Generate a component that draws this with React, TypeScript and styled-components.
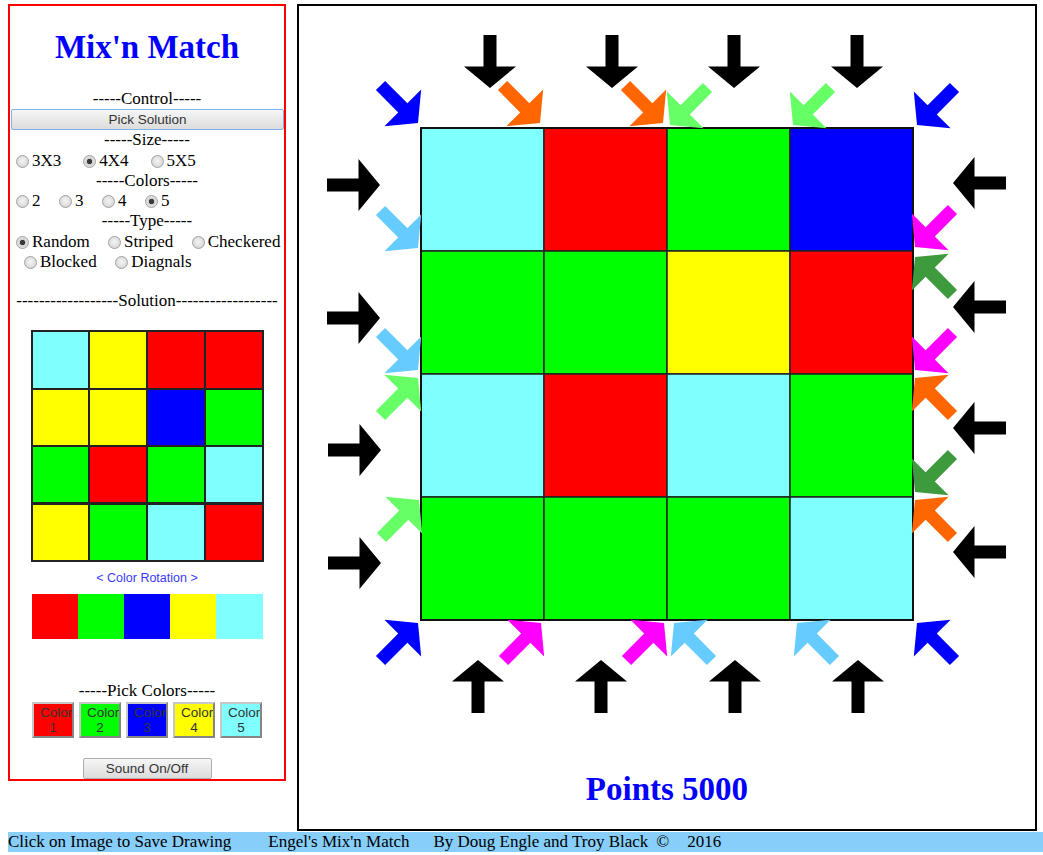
import React from "react";
import styled, { createGlobalStyle } from "styled-components";

const GlobalStyle = createGlobalStyle`
  html, body {
    margin: 0;
    padding: 0;
    background: #fff;
  }
  body {
    padding: 4px 0 0 8px;
    font-family: "Liberation Serif", "Times New Roman", serif;
    font-size: 17px;
    color: #000;
    overflow: hidden;
  }
`;

const C = {
  cyan: "#80ffff",
  red: "#ff0000",
  green: "#00ff00",
  blue: "#0000ff",
  yellow: "#ffff00",
};

const A = {
  black: "#000000",
  blue: "#0000ff",
  orange: "#ff6600",
  lime: "#66ff66",
  sky: "#66ccff",
  magenta: "#ff00ff",
  forest: "#3d9a3d",
};

const Page = styled.div`
  display: flex;
  flex-direction: column;
`;

const MainRow = styled.div`
  display: flex;
  align-items: flex-start;
  gap: 11px;
`;

const SidePanel = styled.div`
  width: 274px;
  height: 773px;
  border: 2px solid #ff0000;
  display: flex;
  flex-direction: column;
  align-items: center;
  text-align: center;
`;

const Title = styled.h1`
  margin: 23px 0 0;
  height: 37px;
  line-height: 37px;
  font-size: 33px;
  font-weight: bold;
  color: #0000ff;
`;

const SectionLabel = styled.div<{ $top?: number }>`
  margin-top: ${({ $top }) => $top ?? 0}px;
  height: 20.3px;
  line-height: 20.3px;
  white-space: nowrap;
`;

const GrayButton = styled.button<{ $focused?: boolean }>`
  box-sizing: border-box;
  height: 21px;
  padding: 0 6px;
  font-family: "Liberation Sans", Arial, sans-serif;
  font-size: 13.5px;
  color: #333;
  background: linear-gradient(#f6f6f6, #dcdcdc);
  border: 1px solid ${({ $focused }) => ($focused ? "#7eb4ea" : "#adadad")};
  border-radius: 2px;
`;

const PickButton = styled(GrayButton)`
  width: 273px;
  margin-left: 1px;
`;

const SoundButton = styled(GrayButton)`
  width: 129px;
  margin-top: 20px;
`;

const RadioRow = styled.div<{ $indent: number; $gap: number }>`
  align-self: stretch;
  height: 20.3px;
  display: flex;
  align-items: center;
  gap: ${({ $gap }) => $gap}px;
  padding-left: ${({ $indent }) => $indent}px;
  white-space: nowrap;
`;

const RadioLabel = styled.label`
  display: flex;
  align-items: center;
  gap: 3px;
`;

const Radio = styled.input`
  appearance: none;
  margin: 1px 0 0;
  width: 13px;
  height: 13px;
  border-radius: 50%;
  border: 1px solid #a0a0a0;
  background: radial-gradient(circle at 50% 45%, #f4f4f4 0, #dadada 70%, #c8c8c8 100%);
  box-sizing: border-box;
  &:checked {
    background: radial-gradient(circle, #3a3a3a 0, #3a3a3a 2.4px, #cfcfcf 3px, #e4e4e4 70%, #c8c8c8 100%);
  }
`;

const SolutionGrid = styled.div`
  margin-top: 19px;
  width: 233px;
  height: 232px;
  box-sizing: border-box;
  padding: 2px;
  display: grid;
  grid-template-columns: repeat(4, 1fr);
  grid-template-rows: repeat(4, 1fr);
  gap: 2.3px;
  background: #222;
`;

const Cell = styled.div<{ $color: string }>`
  background: ${({ $color }) => $color};
`;

const RotationLabel = styled.div`
  margin-top: 8px;
  height: 16px;
  line-height: 16px;
  font-family: "Liberation Sans", Arial, sans-serif;
  font-size: 12.5px;
  color: #3a3aff;
`;

const Strip = styled.div`
  margin-top: 8px;
  width: 231px;
  height: 45px;
  display: flex;
`;

const Swatch = styled.div<{ $color: string }>`
  flex: 1;
  background: ${({ $color }) => $color};
`;

const ColorButtons = styled.div`
  margin-top: 1px;
  display: flex;
  gap: 5px;
`;

const ColorButton = styled.button<{ $color: string }>`
  box-sizing: border-box;
  width: 42px;
  height: 36px;
  padding: 1px 6px;
  overflow: hidden;
  background: ${({ $color }) => $color};
  border: 2px solid;
  border-color: #c8c8c8 #858585 #858585 #c8c8c8;
  font-family: "Liberation Sans", Arial, sans-serif;
  font-size: 13.5px;
  line-height: 15px;
  color: #333;
  text-align: center;
`;

const Board = styled.div`
  width: 736px;
  height: 823px;
  border: 2px solid #000;
  display: flex;
  flex-direction: column;
  align-items: center;
`;

const BoardDrawing = styled.svg`
  display: block;
  flex: none;
`;

const Points = styled.div`
  margin-top: 21px;
  height: 37px;
  line-height: 37px;
  font-size: 33px;
  font-weight: bold;
  color: #0000ff;
`;

const Footer = styled.div`
  height: 20px;
  margin-top: 1px;
  background: #87cefa;
  display: flex;
  align-items: center;
  font-size: 17px;
  white-space: nowrap;
`;

const FooterItem = styled.span<{ $left: number }>`
  margin-left: ${({ $left }) => $left}px;
`;

const boardGrid = [
  [C.cyan, C.red, C.green, C.blue],
  [C.green, C.green, C.yellow, C.red],
  [C.cyan, C.red, C.cyan, C.green],
  [C.green, C.green, C.green, C.cyan],
];

const solutionGrid = [
  [C.cyan, C.yellow, C.red, C.red],
  [C.yellow, C.yellow, C.blue, C.green],
  [C.green, C.red, C.green, C.cyan],
  [C.yellow, C.green, C.cyan, C.red],
];

const rotation = [C.red, C.green, C.blue, C.yellow, C.cyan];

// tip x, tip y, direction in degrees, colour
type ArrowSpec = [number, number, number, string];

const arrows: ArrowSpec[] = [
  // straight arrows
  [490, 88, 90, A.black],
  [612, 88, 90, A.black],
  [734, 88, 90, A.black],
  [857, 88, 90, A.black],
  [380, 185, 0, A.black],
  [380, 318, 0, A.black],
  [381, 450, 0, A.black],
  [381, 563, 0, A.black],
  [953, 183, 180, A.black],
  [953, 307, 180, A.black],
  [953, 428, 180, A.black],
  [953, 552, 180, A.black],
  [478, 660, -90, A.black],
  [601, 660, -90, A.black],
  [735, 660, -90, A.black],
  [858, 660, -90, A.black],
  // top diagonals
  [418, 123, 45, A.blue],
  [540, 123, 45, A.orange],
  [663, 123, 45, A.orange],
  [670, 125, 135, A.lime],
  [793, 125, 135, A.lime],
  [917, 125, 135, A.blue],
  // left diagonals
  [418, 248, 45, A.sky],
  [418, 370, 45, A.sky],
  [418, 378, -45, A.lime],
  [419, 500, -45, A.lime],
  // right diagonals
  [915, 247, 135, A.magenta],
  [915, 257, 225, A.forest],
  [915, 370, 135, A.magenta],
  [915, 378, 225, A.orange],
  [915, 492, 135, A.forest],
  [915, 500, 225, A.orange],
  // bottom diagonals
  [418, 623, -45, A.blue],
  [541, 623, -45, A.magenta],
  [664, 623, -45, A.magenta],
  [674, 623, 225, A.sky],
  [797, 623, 225, A.sky],
  [917, 623, 225, A.blue],
];

const ARROW = "0,0 -21.5,-26 -21.5,-6.5 -53,-6.5 -53,6.5 -21.5,6.5 -21.5,26";

const GX = 421;
const GY = 128;
const CELL = 123;

const BoardCanvas = () => (
  <BoardDrawing width={736} height={744} viewBox="299 6 736 744">
    {boardGrid.map((row, r) =>
      row.map((color, c) => (
        <rect
          key={`${r}-${c}`}
          x={GX + c * CELL}
          y={GY + r * CELL}
          width={CELL}
          height={CELL}
          fill={color}
          stroke="#222"
          strokeWidth={1.5}
        />
      ))
    )}
    <rect x={GX} y={GY} width={CELL * 4} height={CELL * 4} fill="none" stroke="#111" strokeWidth={2} />
    {arrows.map(([x, y, deg, color], i) => (
      <polygon key={i} points={ARROW} fill={color} transform={`translate(${x} ${y}) rotate(${deg})`} />
    ))}
  </BoardDrawing>
);

type RadioGroup = {
  name: string;
  gap: number;
  rows: { indent: number; items: string[] }[];
  checked: string;
};

const RadioSet = ({ group }: { group: RadioGroup }) => (
  <>
    {group.rows.map((row, i) => (
      <RadioRow key={i} $indent={row.indent} $gap={group.gap}>
        {row.items.map((item) => (
          <RadioLabel key={item}>
            <Radio type="radio" name={group.name} defaultChecked={item === group.checked} />
            {item}
          </RadioLabel>
        ))}
      </RadioRow>
    ))}
  </>
);

const sizeGroup: RadioGroup = {
  name: "size",
  gap: 22,
  rows: [{ indent: 6, items: ["3X3", "4X4", "5X5"] }],
  checked: "4X4",
};

const colorsGroup: RadioGroup = {
  name: "colors",
  gap: 18.5,
  rows: [{ indent: 6, items: ["2", "3", "4", "5"] }],
  checked: "5",
};

const typeGroup: RadioGroup = {
  name: "type",
  gap: 18.5,
  rows: [
    { indent: 6, items: ["Random", "Striped", "Checkered"] },
    { indent: 14, items: ["Blocked", "Diagnals"] },
  ],
  checked: "Random",
};

const App = () => (
  <Page>
    <GlobalStyle />
    <MainRow>
      <SidePanel>
        <Title>Mix'n Match</Title>
        <SectionLabel $top={23}>-----Control-----</SectionLabel>
        <PickButton $focused>Pick Solution</PickButton>
        <SectionLabel>-----Size-----</SectionLabel>
        <RadioSet group={sizeGroup} />
        <SectionLabel>-----Colors-----</SectionLabel>
        <RadioSet group={colorsGroup} />
        <SectionLabel>-----Type-----</SectionLabel>
        <RadioSet group={typeGroup} />
        <SectionLabel $top={19}>------------------Solution------------------</SectionLabel>
        <SolutionGrid>
          {solutionGrid.flat().map((color, i) => (
            <Cell key={i} $color={color} />
          ))}
        </SolutionGrid>
        <RotationLabel>&lt; Color Rotation &gt;</RotationLabel>
        <Strip>
          {rotation.map((color, i) => (
            <Swatch key={i} $color={color} />
          ))}
        </Strip>
        <SectionLabel $top={42}>-----Pick Colors-----</SectionLabel>
        <ColorButtons>
          {rotation.map((color, i) => (
            <ColorButton key={i} $color={color}>
              Color {i + 1}
            </ColorButton>
          ))}
        </ColorButtons>
        <SoundButton>Sound On/Off</SoundButton>
      </SidePanel>
      <Board>
        <BoardCanvas />
        <Points>Points 5000</Points>
      </Board>
    </MainRow>
    <Footer>
      <FooterItem $left={0}>Click on Image to Save Drawing</FooterItem>
      <FooterItem $left={37}>Engel's Mix'n Match</FooterItem>
      <FooterItem $left={24}>By Doug Engle and Troy Black</FooterItem>
      <FooterItem $left={8}>©</FooterItem>
      <FooterItem $left={18}>2016</FooterItem>
    </Footer>
  </Page>
);

export default App;
